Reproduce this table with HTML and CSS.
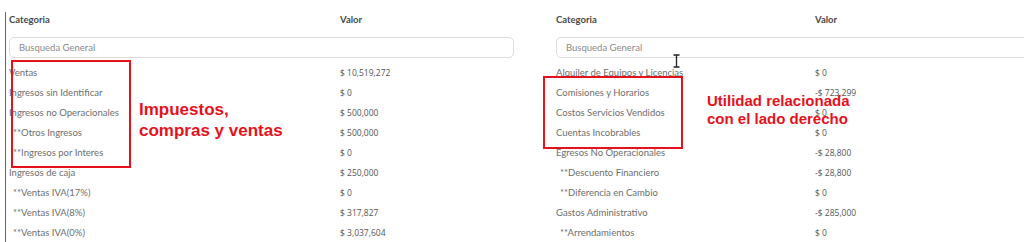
FILE: index.html
```html
<!DOCTYPE html>
<html lang="es">
<head>
<meta charset="utf-8">
<title>Categorias</title>
<link rel="stylesheet" href="styles.css">
</head>
<body>
<div class="page">
  <section class="panel panel-left">
    <div class="table table-left">
      <div class="th">Categoria</div><div class="th">Valor</div>
      <div class="search-row"><div class="search">Busqueda General</div></div>
      <div class="cat">Ventas</div><div class="val">$ 10,519,272</div>
      <div class="cat">Ingresos sin Identificar</div><div class="val">$ 0</div>
      <div class="cat">Ingresos no Operacionales</div><div class="val">$ 500,000</div>
      <div class="cat sub">**Otros Ingresos</div><div class="val">$ 500,000</div>
      <div class="cat sub">**Ingresos por Interes</div><div class="val">$ 0</div>
      <div class="cat">Ingresos de caja</div><div class="val">$ 250,000</div>
      <div class="cat sub">**Ventas IVA(17%)</div><div class="val">$ 0</div>
      <div class="cat sub">**Ventas IVA(8%)</div><div class="val">$ 317,827</div>
      <div class="cat sub">**Ventas IVA(0%)</div><div class="val">$ 3,037,604</div>
    </div>
  </section>
  <section class="panel panel-right">
    <div class="table table-right">
      <div class="th">Categoria</div><div class="th">Valor</div>
      <div class="search-row"><div class="search">Busqueda General</div></div>
      <div class="cat">Alquiler de Equipos y Licencias</div><div class="val">$ 0</div>
      <div class="cat">Comisiones y Horarios</div><div class="val">-$ 723,299</div>
      <div class="cat">Costos Servicios Vendidos</div><div class="val">$ 0</div>
      <div class="cat">Cuentas Incobrables</div><div class="val">$ 0</div>
      <div class="cat">Egresos No Operacionales</div><div class="val">-$ 28,800</div>
      <div class="cat sub">**Descuento Financiero</div><div class="val">-$ 28,800</div>
      <div class="cat sub">**Diferencia en Cambio</div><div class="val">$ 0</div>
      <div class="cat">Gastos Administrativo</div><div class="val">-$ 285,000</div>
      <div class="cat sub">**Arrendamientos</div><div class="val">$ 0</div>
    </div>
  </section>

  <div class="mark mark-left"></div>
  <div class="note note-left">Impuestos,<br>compras y ventas</div>
  <div class="mark mark-right"></div>
  <div class="note note-right">Utilidad relacionada<br>con el lado derecho</div>
  <svg class="cursor" width="9" height="14" viewBox="0 0 9 14"><path d="M1.5 1h6M4.5 1v12M1.5 13h6" stroke="#222" stroke-width="1.3" fill="none"/></svg>
</div>
</body>
</html>
```

FILE: styles.css
```css
html, body {
  margin: 0;
  padding: 0;
  background: #fff;
}
.page {
  position: relative;
  width: 1024px;
  height: 242px;
  overflow: hidden;
  display: flex;
  align-items: flex-start;
  font-family: "Lato", "Open Sans", sans-serif;
  color: #6e6e6e;
}
.panel {
  margin-top: 12px;
  flex-shrink: 0;
}
.panel-left {
  margin-left: 5px;
  border-left: 1.5px solid #666;
  padding-left: 3px;
  width: 505px;
  height: 240px;
}
.panel-right {
  margin-left: 42px;
  width: 480px;
}
.table {
  display: grid;
  grid-template-rows: 25px 25px;
  grid-auto-rows: 20px;
  align-items: center;
}
.table-left { grid-template-columns: 331px 1fr; }
.table-right { grid-template-columns: 259px 1fr; }
.th {
  align-self: start;
  padding-top: 2px;
  font-weight: 700;
  font-size: 9.5px;
  color: #4a4a4a;
}
.search-row {
  grid-column: 1 / -1;
  align-self: start;
}
.search {
  height: 21px;
  box-sizing: border-box;
  border: 1px solid #dcdcdc;
  border-radius: 5px;
  padding-left: 9px;
  display: flex;
  align-items: center;
  font-size: 9.5px;
  color: #8a8a8a;
}
.panel-right .search { width: 520px; }
.cat {
  font-size: 9.5px;
  color: #6e6e6e;
  white-space: nowrap;
}
.cat.sub { padding-left: 4px; }
.val {
  font-family: "Open Sans", sans-serif;
  font-size: 8.5px;
  color: #555;
  white-space: nowrap;
}
.mark {
  position: absolute;
  border: 2px solid #e5121c;
  box-sizing: border-box;
}
.mark-left { left: 11px; top: 60px; width: 120px; height: 108px; }
.mark-right { left: 543px; top: 76px; width: 140px; height: 73px; }
.note {
  position: absolute;
  font-family: "Liberation Sans", Arial, sans-serif;
  font-weight: 700;
  color: #e5121c;
}
.note-left { left: 139px; top: 99px; font-size: 17px; line-height: 21px; }
.note-right { left: 707px; top: 92px; font-size: 15px; line-height: 18px; }
.cursor {
  position: absolute;
  left: 672px;
  top: 54px;
}
```
